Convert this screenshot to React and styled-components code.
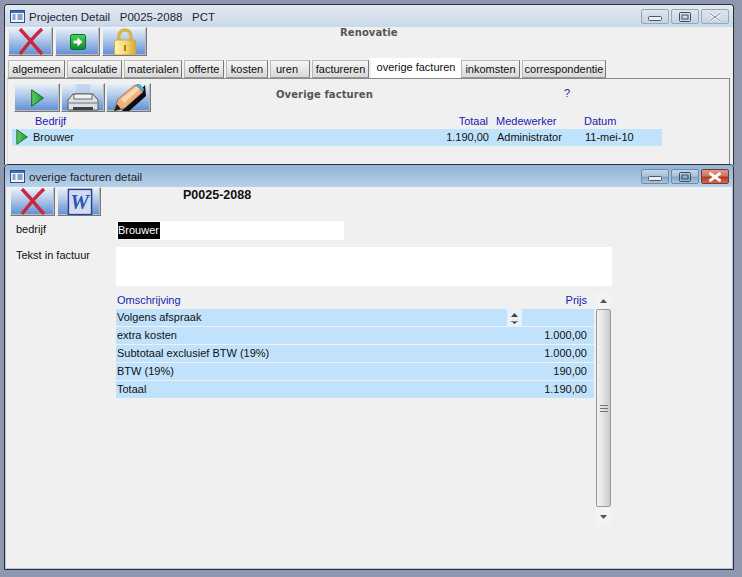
import React from 'react';
import styled, { createGlobalStyle } from 'styled-components';

const Global = createGlobalStyle`
  html, body { margin: 0; padding: 0; }
  body { width: 742px; height: 577px; overflow: hidden; background: #8e97ad; font-family: "Liberation Sans", Arial, sans-serif; font-size: 11px; color: #111; }
  * { box-sizing: border-box; }
`;

const Desktop = styled.div`position: relative; width: 742px; height: 577px; overflow: hidden;`;
const Win = styled.div`
  position: absolute; left: 4px; top: ${p => p.$top}px; width: 730px; height: ${p => p.$h}px;
  border: 1px solid #2a3038; border-bottom-width: ${p => p.$last ? 1 : 0}px;
  border-radius: 4px 4px 0 0; display: flex; flex-direction: column; overflow: hidden;
  background: ${p => p.$active ? '#a9c8e3' : '#d3dfea'};
`;
const TitleBar = styled.div`
  height: 22px; flex: none; display: flex; align-items: center; padding: 1px 4px 0 5px;
  background: ${p => p.$active ? 'linear-gradient(#92b3d4, #b7d1e9)' : 'linear-gradient(#e4e9f0, #c9d9e9)'};
`;
const TitleText = styled.span`margin-left: 4px; font-size: 11.5px; color: #1c2530; white-space: pre; flex: 1;`;
const WinBtns = styled.div`display: flex; gap: 2px;`;
const WinBtn = styled.div`
  width: 28px; height: 15px; border-radius: 2px; display: flex; align-items: center; justify-content: center;
  border: 1px solid ${p => p.$close ? '#7a3a32' : p.$active ? '#6f8ba8' : '#98a6b6'};
  background: ${p => p.$close ? 'linear-gradient(#dc9b86 0, #cf7560 45%, #b23a22 55%, #cc6a50)'
    : p.$active ? 'linear-gradient(#c4d6e8 0, #a9c3dc 45%, #86a6c6 55%, #a8c4de)' : 'linear-gradient(#dde6ef, #c4d3e2)'};
`;
const Body = styled.div`
  flex: 1; min-height: 0; background: #f0f0f0; display: flex; flex-direction: column;
  margin: 0 ${p => p.$framed ? 1 : 0}px ${p => p.$framed ? 1 : 0}px;
`;
const Toolbar = styled.div`display: flex; flex: none; height: 29px; gap: ${p => p.$gap ?? 2}px; padding-left: ${p => p.$left}px; margin-top: ${p => p.$top ?? 0}px;`;
const Bevel = styled.div`
  width: ${p => p.$w ?? 45}px; height: 29px; flex: none; display: flex; align-items: center; justify-content: center;
  border: 1px solid; border-color: #f4f4f4 #777 #777 #eee; box-shadow: inset -1px -1px 0 #bbb;
  background: linear-gradient(#e8f0f9 0, #bcd1ec 35%, #739ddb 85%, #618dd4);
  overflow: hidden;
`;
const Heading = styled.div`
  font-family: "DejaVu Sans", sans-serif; font-weight: bold; font-size: 10px; letter-spacing: .1px; color: #555;
  margin-left: ${p => p.$left}px; margin-top: ${p => p.$top}px; white-space: nowrap;
`;
const DocCode = styled.div`
  font-family: "Liberation Sans", sans-serif; font-weight: bold; font-size: 12.5px; color: #111;
  margin-left: ${p => p.$left}px; margin-top: 1px;
`;
const Tabs = styled.div`display: flex; flex: none; gap: 2px; padding-left: 3px; margin-top: 4px; height: 18px; position: relative; z-index: 1;`;
const Tab = styled.div`
  width: ${p => p.$w}px; flex: none; font-size: 11px; display: flex; align-items: center; white-space: nowrap;
  justify-content: ${p => p.$start ? 'flex-start' : 'center'}; padding-left: ${p => p.$start ? 5 : 0}px;
  height: ${p => p.$on ? 20 : 18}px; margin-top: ${p => p.$on ? -2 : 0}px; margin-right: ${p => p.$on ? -2 : 0}px;
  background: ${p => p.$on ? '#fff' : 'linear-gradient(#f6f6f6, #d8d8d8)'};
  border: ${p => p.$on ? 'none' : '1px solid'}; border-color: #bbb #777 #999 #bbb;
  padding-bottom: ${p => p.$on ? 3 : 0}px;
`;
const Panel = styled.div`
  margin: 0 3px 0 2px; flex: 1; background: #f0f0f0; border-top: 1px solid #888; border-right: 1px solid #888; border-left: 1px solid #ddd; display: flex; flex-direction: column;
`;
const QMark = styled.div`color: #1a1ab0; margin-left: 190px; margin-top: 4px;`;
const LineGrid = styled.div`
  display: grid; grid-template-columns: 21px 1fr 69px 96px 77px; align-items: center;
  width: 650px; margin-left: ${p => p.$left}px; height: ${p => p.$h}px; flex: none; margin-top: ${p => p.$top ?? 0}px;
  background: ${p => p.$fill ? '#c1e2fc' : 'transparent'}; color: ${p => p.$fill ? '#111' : '#1a1ab0'};
  padding-bottom: ${p => p.$fill ? 1 : 2}px;
`;
const Right = styled.div`text-align: right; white-space: nowrap;`;
const Pad = styled.div`padding-left: ${p => p.$l ?? 0}px; white-space: nowrap; display: flex;`;
const FormRow = styled.div`display: grid; grid-template-columns: 110px 1fr; flex: none; margin-top: ${p => p.$top}px;`;
const Label = styled.div`padding-left: 10px; padding-top: ${p => p.$pt}px; color: #111;`;
const Field = styled.div`background: #fff; width: ${p => p.$w}px; height: ${p => p.$h}px; padding: 1px 2px;`;
const Sel = styled.span`display: inline-block; background: #000; color: #fff; height: 17px; line-height: 16px; padding-right: 1px;`;
const TableWrap = styled.div`display: flex; margin-left: 110px; margin-top: 7px; gap: 2px;`;
const Table = styled.div`width: 478px; display: flex; flex-direction: column; gap: 1px;`;
const THead = styled.div`display: flex; justify-content: space-between; height: 15px; padding: 0 7px 2px 1px; color: #1a1ab0; align-items: center;`;
const TRow = styled.div`position: relative; height: 17px; background: #c1e2fc; display: flex; justify-content: space-between; align-items: center; padding: 0 7px 1px 1px; white-space: nowrap;`;
const Stepper = styled.div`position: absolute; left: 391px; top: 0; width: 15px; height: 18px; background: #e6f1fa; display: flex; align-items: center; justify-content: center;`;
const Scroll = styled.div`width: 15px; height: 233px; display: flex; flex-direction: column; background: #f0f0f0;`;
const ScrollBtn = styled.div`height: ${p => p.$h}px; flex: none; display: flex; align-items: center; justify-content: center; background: #f3f3f3;`;
const Thumb = styled.div`
  height: 198px; flex: none; border: 1px solid #9a9a9a; border-radius: 2px;
  background: linear-gradient(90deg, #f2f2f2, #e4e4e4 45%, #c9c9cc);
  display: flex; align-items: center; justify-content: center;
`;

const WinIcon = () => (
  <svg width="15" height="13" viewBox="0 0 15 13">
    <rect x=".5" y=".5" width="14" height="12" fill="#eef3fa" stroke="#2d4f8e" />
    <rect x="1" y="1" width="13" height="2" fill="#3f6db8" />
    <path d="M2.5 5h3M2.5 7h3M2.5 9h3M7.5 5h5M7.5 7h5M7.5 9h5" stroke="#2d4f8e" />
  </svg>
);
const MinG = () => <svg width="14" height="8"><rect x=".5" y="3.5" width="13" height="4" rx="1" fill="#e8eef4" stroke="#4a5a6c" /></svg>;
const MaxG = () => <svg width="12" height="10"><rect x=".5" y=".5" width="11" height="9" rx="1" fill="none" stroke="#3f4e5e" /><rect x="3" y="3" width="6" height="4" fill="none" stroke="#3f4e5e" /></svg>;
const CloseG = ({ hot }) => (
  <svg width="16" height="10" viewBox="0 0 16 10">
    <path d="M2.5 1 L13.5 9 M13.5 1 L2.5 9" stroke={hot ? '#f8f4f2' : '#f2f5f8'} strokeWidth="3" />
    <path d="M2.5 1 L13.5 9 M13.5 1 L2.5 9" stroke={hot ? '#fff' : '#7c8896'} strokeWidth="1" />
  </svg>
);
const RedX = () => (
  <svg width="26" height="27" viewBox="0 0 26 27"><path d="M2 1 L12 12 Q15 16 24 26 M24 1 Q16 8 2 26" stroke="#c9273f" strokeWidth="3.4" fill="none" /></svg>
);
const GoIcon = () => (
  <svg width="16" height="16" viewBox="0 0 16 16">
    <defs><linearGradient id="gg" x1="0" y1="0" x2="0" y2="1"><stop offset="0" stopColor="#4fd05a" /><stop offset="1" stopColor="#0c8a2c" /></linearGradient></defs>
    <rect x=".5" y=".5" width="15" height="15" rx="2" fill="url(#gg)" stroke="#0a6b28" />
    <path d="M3.5 6.5h4v-3l5 4.5-5 4.5v-3h-4z" fill="#fff" />
  </svg>
);
const Lock = () => (
  <svg width="24" height="27" viewBox="0 0 24 27">
    <defs><linearGradient id="lk" x1="0" y1="0" x2="1" y2="0"><stop offset="0" stopColor="#fff6c0" /><stop offset=".55" stopColor="#f4d870" /><stop offset="1" stopColor="#d4a83a" /></linearGradient></defs>
    <path d="M6 13V8a6 6 0 0 1 12 0v5" fill="none" stroke="#d8b450" strokeWidth="3.5" />
    <rect x="1.5" y="12" width="21" height="15" rx="2" fill="url(#lk)" stroke="#d0a63c" />
    <rect x="11" y="17" width="2" height="6" fill="#a8831e" />
  </svg>
);
const Play = ({ w = 13, h = 18 }) => (
  <svg width={w} height={h} viewBox="0 0 13 18">
    <defs><linearGradient id="pl" x1="0" y1="0" x2="1" y2="0"><stop offset="0" stopColor="#62c866" /><stop offset="1" stopColor="#17a02e" /></linearGradient></defs>
    <path d="M.7.8 12.4 9 .7 17.2z" fill="url(#pl)" stroke="#0c6a22" />
  </svg>
);
const Printer = () => (
  <svg width="34" height="28" viewBox="0 0 34 28">
    <path d="M9 0h16l2 11H7z" fill="#b8cde6" opacity=".7" />
    <path d="M10 0 8 10M24 0l2 10" stroke="#e8e8e8" fill="none" />
    <path d="M7 10h20l5 6v10H2V16z" fill="#dcdfe2" stroke="#555" />
    <rect x="8" y="10" width="18" height="5" fill="#f2f2f2" stroke="#666" />
    <rect x="2.5" y="18" width="29" height="2" fill="#a4a8ae" />
    <rect x="7" y="23" width="20" height="3" fill="#3e4246" />
  </svg>
);
const Pencil = () => (
  <svg width="34" height="28" viewBox="0 0 34 28">
    <path d="M10 27 33 1 34 12 16 28z" fill="#0c0c18" />
    <path d="M2 27 6 15 23 1 31 8 13 24z" fill="#eeb27a" stroke="#8a5a2a" strokeWidth=".7" />
    <path d="M9 15 25 2 28 5 12 19z" fill="#f8d8b0" />
    <path d="M23 1 27 -1 32 5 31 8z" fill="#58a8c8" />
    <path d="M2 27 5 20 9 25z" fill="#222" />
  </svg>
);
const WordIcon = () => (
  <svg width="28" height="27" viewBox="0 0 28 27">
    <rect x="3.5" y="1.5" width="23" height="25" fill="#fff" stroke="#2a3f8e" strokeWidth="1.6" />
    <rect x="5" y="3" width="20" height="22" fill="#cfdcf3" />
    <text x="14.5" y="21" textAnchor="middle" fontFamily="Liberation Serif, serif" fontStyle="italic" fontWeight="bold" fontSize="21" fill="#2b55b0">W</text>
  </svg>
);
const Up = () => <svg width="7" height="4"><path d="M3.5 0 7 4H0z" fill="#555" /></svg>;
const Down = () => <svg width="7" height="4"><path d="M0 0h7L3.5 4z" fill="#555" /></svg>;
const Grip = () => <svg width="8" height="9"><path d="M0 1.5h8M0 4.5h8M0 7.5h8" stroke="#777" /></svg>;
const Spin = () => (
  <svg width="7" height="14"><path d="M3.5 2 7 6H0z" fill="#444" /><path d="M0 10h7l-3.5 3z" fill="#444" /><path d="M0 10.5h7" stroke="#888" /></svg>
);

const tabs = [
  ['algemeen', 57], ['calculatie', 55], ['materialen', 58], ['offerte', 40], ['kosten', 42], ['uren', 40, false, true],
  ['factureren', 57], ['overige facturen', 90, true], ['inkomsten', 59], ['correspondentie', 84],
];
const rows = [
  ['Volgens afspraak', ''], ['extra kosten', '1.000,00'], ['Subtotaal exclusief BTW (19%)', '1.000,00'],
  ['BTW (19%)', '190,00'], ['Totaal', '1.190,00'],
];

const Controls = ({ active }) => (
  <WinBtns>
    <WinBtn $active={active}><MinG /></WinBtn>
    <WinBtn $active={active}><MaxG /></WinBtn>
    <WinBtn $active={active} $close={active}><CloseG hot={active} /></WinBtn>
  </WinBtns>
);

export default function App() {
  return (
    <Desktop>
      <Global />
      <Win $top={4} $h={161}>
        <TitleBar>
          <WinIcon />
          <TitleText>Projecten Detail   P0025-2088   PCT</TitleText>
          <Controls />
        </TitleBar>
        <Body>
          <Toolbar $left={3} $gap={2}>
            <Bevel><RedX /></Bevel>
            <Bevel><GoIcon /></Bevel>
            <Bevel><Lock /></Bevel>
            <Heading $left={191} $top={0}>Renovatie</Heading>
          </Toolbar>
          <Tabs>
            {tabs.map(([t, w, on, start]) => <Tab key={t} $w={w} $on={on} $start={start}>{t}</Tab>)}
          </Tabs>
          <Panel>
            <Toolbar $left={6} $gap={1} $top={4}>
              <Bevel $w={46}><Play /></Bevel>
              <Bevel $w={44}><Printer /></Bevel>
              <Bevel $w={45}><Pencil /></Bevel>
              <Heading $left={124} $top={6}>Overige facturen</Heading>
              <QMark>?</QMark>
            </Toolbar>
            <LineGrid $left={3} $h={15} $top={2}>
              <span />
              <Pad $l={3}>Bedrijf</Pad>
              <Right>Totaal</Right>
              <Pad $l={8}>Medewerker</Pad>
              <Pad>Datum</Pad>
            </LineGrid>
            <LineGrid $left={4} $h={17} $top={0} $fill>
              <Pad $l={4}><Play w={12} h={16} /></Pad>
              <Pad>Brouwer</Pad>
              <Right>1.190,00</Right>
              <Pad $l={8}>Administrator</Pad>
              <Pad>11-mei-10</Pad>
            </LineGrid>
          </Panel>
        </Body>
      </Win>
      <Win $top={164} $h={406} $active $last>
        <TitleBar $active>
          <WinIcon />
          <TitleText>overige facturen detail</TitleText>
          <Controls active />
        </TitleBar>
        <Body $framed>
          <Toolbar $left={4} $gap={2}>
            <Bevel><RedX /></Bevel>
            <Bevel $w={44}><WordIcon /></Bevel>
            <DocCode $left={80}>P0025-2088</DocCode>
          </Toolbar>
          <FormRow $top={5}>
            <Label $pt={2}>bedrijf</Label>
            <Field $w={228} $h={19}><Sel>Brouwer</Sel></Field>
          </FormRow>
          <FormRow $top={7}>
            <Label $pt={2}>Tekst in factuur</Label>
            <Field $w={496} $h={39} />
          </FormRow>
          <TableWrap>
            <Table>
              <THead><span>Omschrijving</span><span>Prijs</span></THead>
              {rows.map(([a, b], i) => (
                <TRow key={a}>
                  <span>{a}</span><span>{b}</span>
                  {i === 0 && <Stepper><Spin /></Stepper>}
                </TRow>
              ))}
            </Table>
            <Scroll>
              <ScrollBtn $h={16}><Up /></ScrollBtn>
              <Thumb><Grip /></Thumb>
              <ScrollBtn $h={19}><Down /></ScrollBtn>
            </Scroll>
          </TableWrap>
        </Body>
      </Win>
    </Desktop>
  );
}
